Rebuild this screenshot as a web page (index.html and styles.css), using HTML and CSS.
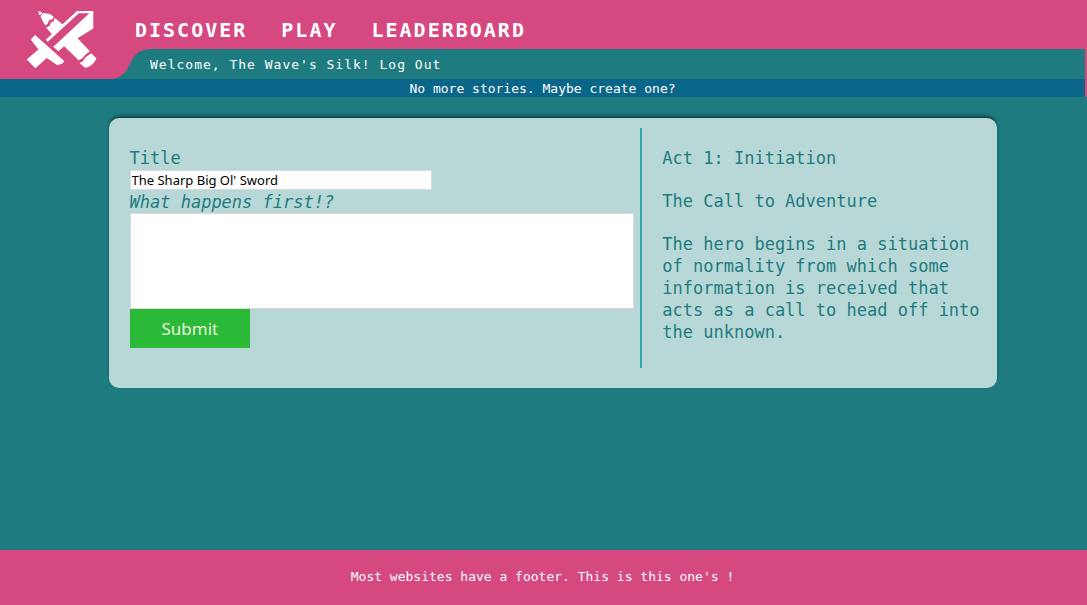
FILE: index.html
```html
<!DOCTYPE html>
<html lang="en">
<head>
<meta charset="utf-8">
<meta name="viewport" content="width=device-width, initial-scale=1">
<title>The Call to Adventure</title>
<link rel="stylesheet" href="styles.css">
</head>
<body>
<header class="site-header">
  <div class="masthead">
    <div class="brand-cell">
      <a class="brand" href="#" aria-label="Home">
        <svg class="logo" viewBox="75 27 218 183" aria-hidden="true">
          <!-- pencil -->
          <path d="M114 33 L126 37 L125 41 L118 46Z"/>
          <path d="M121 49 L129 39 L150 42 L161 51 L156 58 L147 60 L143 70 L136 76 L132 71Z"/>
          <path d="M164 54 L188 73 L156 103 L138 82 L149 77 L152 67 L160 64Z"/>
          <path d="M273 159 L288 174 C284 187 270 202 253 202 L238 188 L248 183 L256 171Z"/>
          <!-- sword -->
          <path d="M230 33 H279 V85 L232 114 L269 153 L256 163 L246 175 L235 180 L192 138 L175 153 L159 140 L168 132 L267 40 H236 L143 125 L137 119Z"/>
          <path d="M105 105 L192 182 L187 190 L172 195 L140 173 L106 204 L80 178 L115 148 L92 118Z"/>
        </svg>
      </a>
    </div>
    <div class="bars">
      <nav class="nav">
        <a href="#">DISCOVER</a>
        <a href="#">PLAY</a>
        <a href="#">LEADERBOARD</a>
      </nav>
      <p class="user-bar">Welcome, The Wave's Silk! <a href="#">Log Out</a></p>
    </div>
  </div>
  <p class="notice">No more stories. Maybe create one?</p>
</header>
<main class="page">
  <div class="card">
    <form class="story-form">
      <label for="title">Title</label>
      <input class="title-input" id="title" type="text" value="The Sharp Big Ol' Sword">
      <label class="prompt" for="story">What happens first!?</label>
      <textarea class="story-input" id="story"></textarea>
      <button class="submit" type="submit">Submit</button>
    </form>
    <section class="guide">
      <p>Act 1: Initiation</p>
      <p>The Call to Adventure</p>
      <p>The hero begins in a situation of normality from which some information is received that acts as a call to head off into the unknown.</p>
    </section>
  </div>
</main>
<footer class="footer">Most websites have a footer. This is this one's !</footer>
</body>
</html>
```

FILE: styles.css
```css
* { box-sizing: border-box; }

body {
  display: flex;
  flex-direction: column;
  min-height: 100vh;
  margin: 0;
  background: #1e7b80;
  color: #fff;
  font-family: "DejaVu Sans Mono", monospace;
  font-size: 13px;
}

p { margin: 0; }

a {
  color: inherit;
  text-decoration: none;
}

.site-header {
  padding-right: 2px;
  background: #d64880;
}

.masthead { display: flex; }

.brand-cell {
  display: flex;
  flex: 0 0 130px;
  background: #1e7b80;
}

.brand {
  flex: 1;
  padding: 9px 0 0 25px;
  background: #d64880;
  border-bottom-right-radius: 20px;
}

.logo {
  display: block;
  width: 73px;
  fill: #fff;
}

.bars { flex: 1; }

.nav {
  display: flex;
  gap: 34px;
  padding: 12px 5px 1px;
  font-size: 20px;
  font-weight: bold;
  line-height: 36px;
  letter-spacing: 2px;
}

.user-bar {
  padding: 1px 0 0 20px;
  background: #1e7b80;
  border-top-left-radius: 20px;
  line-height: 29px;
  letter-spacing: 1px;
}

.notice {
  padding-top: 1px;
  background: #0a6688;
  line-height: 17px;
  text-align: center;
}

.page {
  flex: 1;
  padding: 21px 2px 21px 0;
}

.card {
  display: flex;
  box-sizing: content-box;
  width: 80%;
  margin-left: 10%;
  padding: 10px 9px 20px 11px;
  border-radius: 10px;
  background: #b8d8d7;
  box-shadow: 0 -3px 4px -2px #022;
  color: #1e7b80;
  font-size: 17px;
  line-height: 22px;
}

.story-form {
  display: flex;
  flex: 0 0 60%;
  flex-direction: column;
  align-items: flex-start;
  padding: 19px 6px 20px 10px;
}

.title-input,
.story-input {
  margin: 0;
  border: 1px solid #d9d9d9;
  border-radius: 0;
  background: #fff;
  color: #000;
  font: 13px "Noto Sans", sans-serif;
}

.title-input {
  width: 60%;
  height: 20px;
  margin: 1px 0;
  padding: 1px;
}

.prompt { font-style: italic; }

.story-input {
  width: 100%;
  height: 96px;
  padding: 2px;
  resize: none;
}

.submit {
  padding: 8px 32px;
  border: 0;
  background: #2aba38;
  color: #e8f4dc;
  font: 17px/23px "Noto Sans", sans-serif;
}

.guide {
  display: flex;
  flex: 1;
  flex-direction: column;
  gap: 21px;
  padding: 19px 0 20px 20px;
  border-left: 2px solid #2ea8a9;
}

.footer {
  padding: 17px 2px 19px 0;
  background: #d64880;
  line-height: 19px;
  text-align: center;
}
```
